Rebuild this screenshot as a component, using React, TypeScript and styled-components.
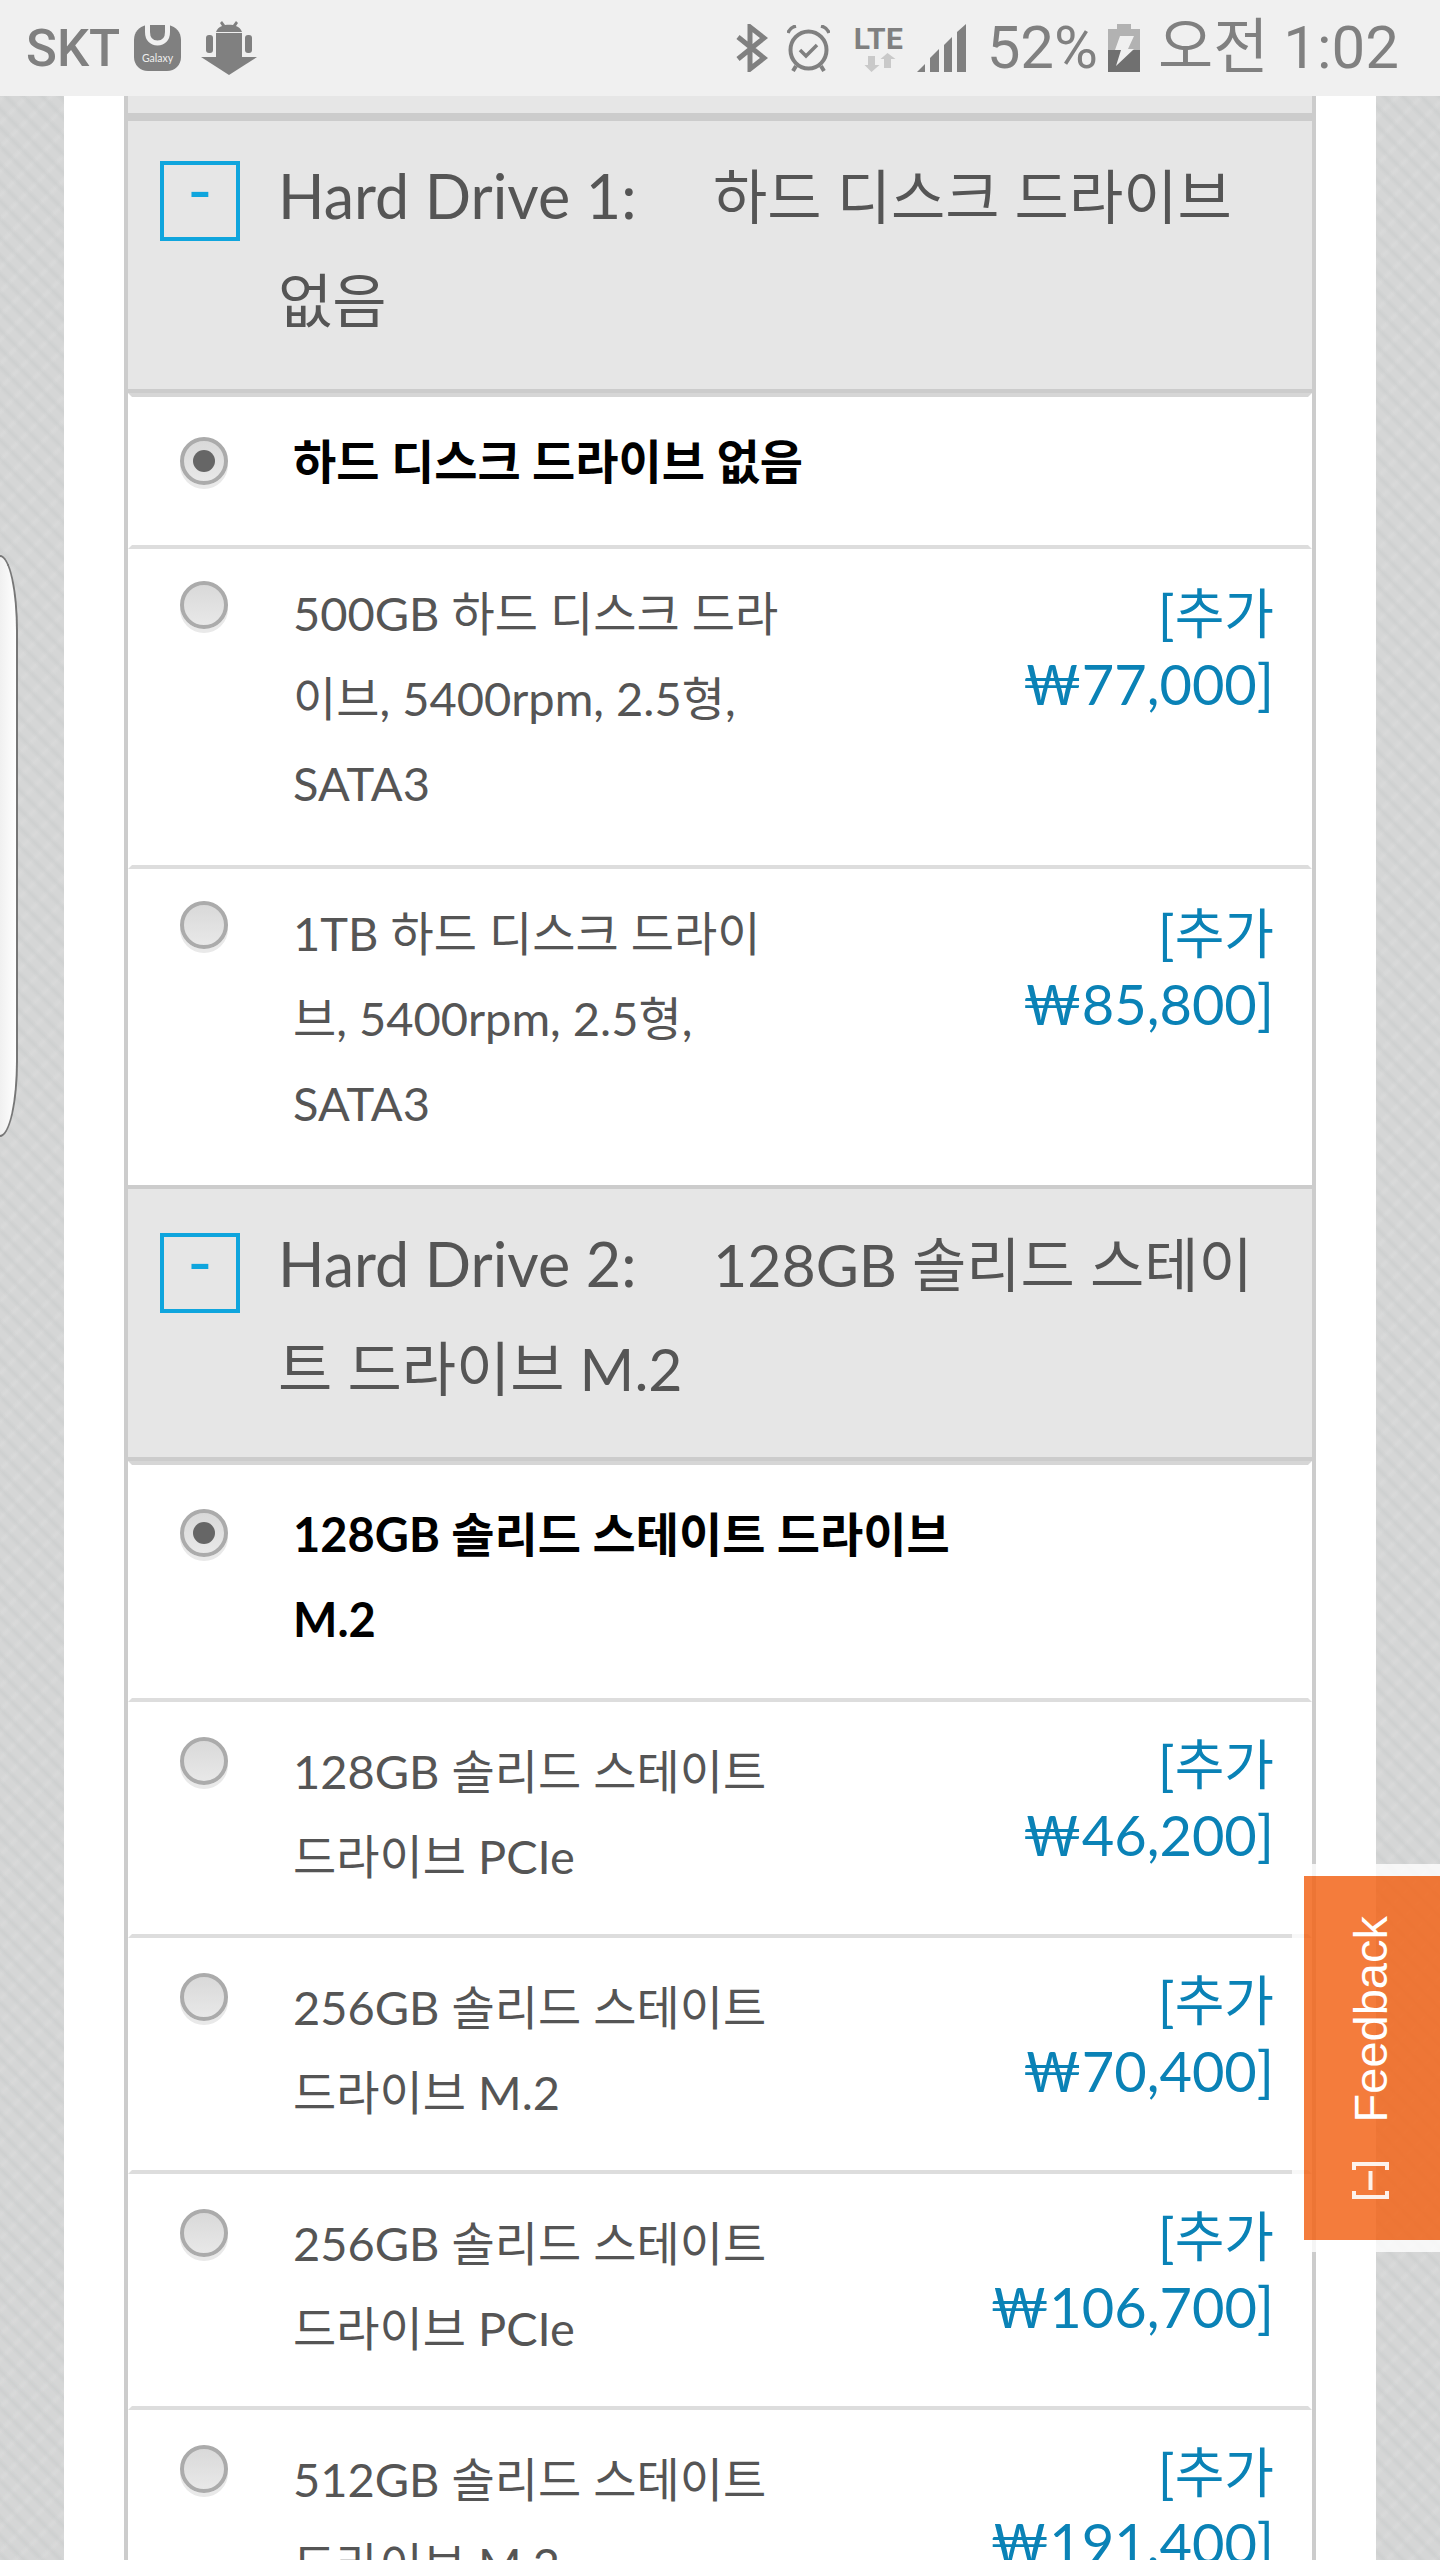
import React from "react";
import styled, { createGlobalStyle } from "styled-components";

const KR = `"Noto Sans CJK KR", sans-serif`;
const BODY = `Lato, "Noto Sans CJK KR", sans-serif`;

const GlobalStyle = createGlobalStyle`
  html, body {
    margin: 0;
    padding: 0;
    background: #fff;
  }
  #root {
    width: 1440px;
    height: 2560px;
    overflow: hidden;
    position: relative;
  }
`;

const StatusBar = styled.div`
  height: 96px;
  background: #f0f0f0;
  display: flex;
  align-items: center;
  justify-content: space-between;
  padding: 0 41px 0 26px;
  box-sizing: border-box;
`;
const StatusGroup = styled.div`
  display: flex;
  align-items: center;
`;
const Carrier = styled.span`
  font: 500 51px/1 Roboto, sans-serif;
  color: #808080;
  margin-right: 14px;
`;
const Glyph = styled.svg<{ $gap?: number }>`
  display: block;
  flex: none;
  margin-left: ${(p) => p.$gap ?? 0}px;
`;
const StatusText = styled.span<{ $gap: number; $size: number }>`
  font: 400 ${(p) => p.$size}px/1 Roboto, ${KR};
  color: #808080;
  margin-left: ${(p) => p.$gap}px;
  white-space: nowrap;
`;
const LteStack = styled.div`
  width: 50px;
  margin-left: 24px;
  display: flex;
  flex-direction: column;
  padding-top: 3px;
`;
const LteText = styled.span`
  font: 700 30px/22px Roboto, sans-serif;
  color: #808080;
  letter-spacing: 0.5px;
`;

const Backdrop = styled.div`
  height: 2464px;
  padding: 0 64px;
  box-sizing: border-box;
  background-color: #d5d6d6;
  background-image:
    repeating-linear-gradient(45deg, rgba(196, 199, 199, 0) 0, rgba(196, 199, 199, 0.4) 4px, rgba(196, 199, 199, 0) 8px, rgba(196, 199, 199, 0) 13px),
    repeating-linear-gradient(-45deg, rgba(226, 226, 226, 0) 0, rgba(226, 226, 226, 0.3) 4px, rgba(226, 226, 226, 0) 8px, rgba(226, 226, 226, 0) 17px);
`;
const Panel = styled.div`
  background: #fff;
  height: 100%;
  padding: 0 60px;
`;
const Config = styled.div`
  border-left: 4px solid #ccc;
  border-right: 4px solid #ccc;
  background: #fff;
`;
const TopStrip = styled.div`
  height: 17px;
  background: #e6e6e6;
  border-bottom: 4px solid #ccc;
`;
const Header = styled.div`
  display: flex;
  background: #e6e6e6;
  border-top: 4px solid #ccc;
  border-bottom: 4px solid #ccc;
  padding: 23px 0 37px 32px;
  height: 208px;
`;
const Toggle = styled.div<{ $drop: number }>`
  width: 80px;
  height: 80px;
  margin-top: ${(p) => p.$drop}px;
  box-sizing: border-box;
  border: 4px solid #0fa5dd;
  color: #0fa5dd;
  font: 400 68px/48px Lato, sans-serif;
  text-align: center;
  flex: none;
`;
const HeaderText = styled.div`
  margin-left: 38px;
  font: 400 59px/104px ${BODY};
  color: #555;
  white-space: nowrap;
`;
const HeaderLabel = styled.span`
  display: inline-block;
  width: 435px;
  font-size: 61px;
`;

const Row = styled.div<{ $first?: boolean; $last?: boolean; $top: number; $bottom: number }>`
  display: flex;
  align-items: flex-start;
  padding: ${(p) => p.$top}px 34px ${(p) => p.$bottom}px 48px;
  border-style: solid;
  border-color: #fff;
  border-width: 0 4px;
  border-top: ${(p) => (p.$first ? "4px solid #d6d6d6" : "0 solid transparent")};
  border-bottom: ${(p) => (p.$last ? "0 solid transparent" : "4px solid #ddd")};
`;
const Radio = styled.div<{ $lift: number }>`
  width: 48px;
  height: 48px;
  flex: none;
  margin-top: ${(p) => p.$lift}px;
  box-sizing: border-box;
  border: 4px solid #ababab;
  border-radius: 50%;
  background: linear-gradient(#d9d9d9, #e8e8e8);
  box-shadow: 0 4px 0 #e9e9e9;
  display: flex;
  align-items: center;
  justify-content: center;
`;
const RadioDot = styled.span`
  width: 22px;
  height: 22px;
  border-radius: 50%;
  background: #666;
`;
const OptionText = styled.div<{ $checked?: boolean }>`
  margin-left: 65px;
  flex: 1;
  font: ${(p) => (p.$checked ? 700 : 400)} 47px/85px ${BODY};
  color: ${(p) => (p.$checked ? "#000" : "#555")};
  white-space: nowrap;
`;
const Price = styled.div<{ $lift: number }>`
  margin-top: ${(p) => p.$lift}px;
  text-align: right;
  font: 400 56px/70px ${BODY};
  color: #0a82b6;
  white-space: nowrap;
`;
const PriceNote = styled.span`
  font-size: 54px;
`;

const SideTab = styled.div`
  position: absolute;
  left: 0;
  top: 555px;
  width: 18px;
  height: 582px;
  box-sizing: border-box;
  border: 2px solid #777;
  border-left: 0;
  border-radius: 0 18px 18px 0 / 0 76px 76px 0;
  background: linear-gradient(90deg, #f0f0f0, #fff);
`;

const Feedback = styled.div`
  position: absolute;
  left: 1292px;
  top: 1864px;
  width: 160px;
  height: 388px;
  box-sizing: border-box;
  border: 12px solid rgba(255, 255, 255, 0.8);
  background: rgba(242, 101, 26, 0.85);
  background-clip: padding-box;
  display: flex;
  align-items: flex-start;
  justify-content: flex-end;
  flex-direction: column;
  padding: 0 0 41px 48px;
  gap: 40px;
`;
const FeedbackLabel = styled.span`
  writing-mode: vertical-rl;
  transform: rotate(180deg);
  font: 400 47px/37px "Liberation Sans", sans-serif;
  color: #fff;
`;

type Option = {
  lines: string[];
  price?: string;
  checked?: boolean;
  top: number;
  bottom: number;
  lift: number;
  priceLift?: number;
};
type Group = { label: string; value: string[]; drop: number; options: Option[] };

const upper = (lines: string[], price: string): Option => ({
  lines,
  price,
  top: 22,
  bottom: 39,
  lift: 10,
  priceLift: 7,
});
const lower = (lines: string[], price: string): Option => ({
  lines,
  price,
  top: 27,
  bottom: 35,
  lift: 8,
  priceLift: 0,
});

const groups: Group[] = [
  {
    label: "Hard Drive 1:",
    value: ["하드 디스크 드라이브", "없음"],
    drop: 17,
    options: [
      { lines: ["하드 디스크 드라이브 없음"], checked: true, top: 22, bottom: 41, lift: 18 },
      upper(["500GB 하드 디스크 드라", "이브, 5400rpm, 2.5형,", "SATA3"], "₩77,000]"),
      upper(["1TB 하드 디스크 드라이", "브, 5400rpm, 2.5형,", "SATA3"], "₩85,800]"),
    ],
  },
  {
    label: "Hard Drive 2:",
    value: ["128GB 솔리드 스테이", "트 드라이브 M.2"],
    drop: 21,
    options: [
      { lines: ["128GB 솔리드 스테이트 드라이브", "M.2"], checked: true, top: 27, bottom: 36, lift: 17 },
      lower(["128GB 솔리드 스테이트", "드라이브 PCIe"], "₩46,200]"),
      lower(["256GB 솔리드 스테이트", "드라이브 M.2"], "₩70,400]"),
      lower(["256GB 솔리드 스테이트", "드라이브 PCIe"], "₩106,700]"),
      lower(["512GB 솔리드 스테이트", "드라이브 M.2"], "₩191,400]"),
    ],
  },
];

const withBreaks = (lines: string[]) =>
  lines.map((line, i) => (
    <React.Fragment key={i}>
      {i > 0 && <br />}
      {line}
    </React.Fragment>
  ));

const GalaxyBag = () => (
  <Glyph width="47" height="46" viewBox="0 0 47 46">
    <path d="M12 0h23c7 2 12 7 12 15v17c0 8-6 14-14 14H14C6 46 0 40 0 32V15C0 7 5 2 12 0z" fill="#808080" />
    <path d="M13.500 0v7c0 7 4 11 10 11s10-4 10-11V0" fill="none" stroke="#f0f0f0" strokeWidth="5" />
    <text x="23.500" y="37" textAnchor="middle" fontFamily="Lato, sans-serif" fontSize="10.500" fill="#eee">
      Galaxy
    </text>
  </Glyph>
);

const AndroidDownload = () => (
  <Glyph $gap={20} width="56" height="54" viewBox="0 0 56 54">
    <g fill="#808080">
      <path d="M15 11c1-3 3-5 6-6l-2-3 2-2 3 4c3-.5 5-.5 8 0l3-4 2 2-2 3c3 1 5 3 6 6z" />
      <rect x="15" y="12" width="26" height="25" />
      <rect x="5" y="14" width="7" height="18" rx="3" />
      <rect x="44" y="14" width="7" height="18" rx="3" />
      <path d="M0 36h56L28 54z" />
    </g>
  </Glyph>
);

const Bluetooth = () => (
  <Glyph width="32" height="48" viewBox="0 0 32 48">
    <path d="M2 13l26 21-14 11V3l14 11L2 35" fill="none" stroke="#808080" strokeWidth="5" />
  </Glyph>
);

const Alarm = () => (
  <Glyph $gap={19} width="43" height="47" viewBox="0 0 43 47">
    <g fill="none" stroke="#808080">
      <ellipse cx="21.500" cy="25" rx="18" ry="18.500" strokeWidth="4" />
      <path d="M13 25l6 6 11-11" strokeWidth="3.500" />
      <path d="M1 8c1-3 4-6 8-7M42 8c-1-3-4-6-8-7" strokeWidth="3.500" />
      <path d="M9 41l-3 5M34 41l3 5" strokeWidth="4" />
    </g>
  </Glyph>
);

const Lte = () => (
  <LteStack>
    <LteText>LTE</LteText>
    <Glyph width="50" height="22" viewBox="0 0 50 22">
      <path d="M14 6h7v9h4.500L17.500 22 10.500 15H14z" fill="#c9c9c9" />
      <path d="M30 18h7V9h4.500L33.500 3 26.500 9H30z" fill="#c9c9c9" />
    </Glyph>
  </LteStack>
);

const Signal = () => (
  <Glyph $gap={13} width="49" height="48" viewBox="0 0 49 48">
    <g fill="#808080">
      <path d="M0 48l8-8v8z" />
      <path d="M13 48V34l9-9v23z" />
      <path d="M27 48V21l8-8v35z" />
      <path d="M40 48V8l9-8v48z" />
    </g>
  </Glyph>
);

const Battery = () => (
  <Glyph $gap={10} width="32" height="48" viewBox="0 0 32 48">
    <path d="M9 0h14v5h9v21H0V5h9z" fill="#b2b2b2" />
    <rect y="26" width="32" height="22" fill="#707070" />
    <path d="M12 12h14l-6 13h6L8 42l5-16H7z" fill="#f0f0f0" />
  </Glyph>
);

const CollapseIcon = () => (
  <Glyph width="37" height="37" viewBox="0 0 37 37">
    <g fill="none" stroke="#fff" strokeWidth="4" opacity="0.9">
      <path d="M2 8V2h33v6M2 29v6h33v-6" />
      <path d="M18.500 9v19" />
    </g>
  </Glyph>
);

export default function App() {
  return (
    <>
      <GlobalStyle />
      <StatusBar>
        <StatusGroup>
          <Carrier>SKT</Carrier>
          <GalaxyBag />
          <AndroidDownload />
        </StatusGroup>
        <StatusGroup>
          <Bluetooth />
          <Alarm />
          <Lte />
          <Signal />
          <StatusText $gap={21} $size={60}>52%</StatusText>
          <Battery />
          <StatusText $gap={18} $size={60}>오전 1:02</StatusText>
        </StatusGroup>
      </StatusBar>
      <Backdrop>
        <Panel>
          <Config>
            <TopStrip />
            {groups.map((group) => (
              <React.Fragment key={group.label}>
                <Header>
                  <Toggle $drop={group.drop}>-</Toggle>
                  <HeaderText>
                    <HeaderLabel>{group.label}</HeaderLabel>
                    {withBreaks(group.value)}
                  </HeaderText>
                </Header>
                {group.options.map((option, i) => (
                  <Row
                    key={i}
                    $first={i === 0}
                    $last={i === group.options.length - 1}
                    $top={option.top}
                    $bottom={option.bottom}
                  >
                    <Radio $lift={option.lift}>{option.checked && <RadioDot />}</Radio>
                    <OptionText $checked={option.checked}>{withBreaks(option.lines)}</OptionText>
                    {option.price && (
                      <Price $lift={option.priceLift ?? 0}>
                        <PriceNote>[추가</PriceNote>
                        <br />
                        {option.price}
                      </Price>
                    )}
                  </Row>
                ))}
              </React.Fragment>
            ))}
          </Config>
        </Panel>
      </Backdrop>
      <SideTab />
      <Feedback>
        <FeedbackLabel>Feedback</FeedbackLabel>
        <CollapseIcon />
      </Feedback>
    </>
  );
}
